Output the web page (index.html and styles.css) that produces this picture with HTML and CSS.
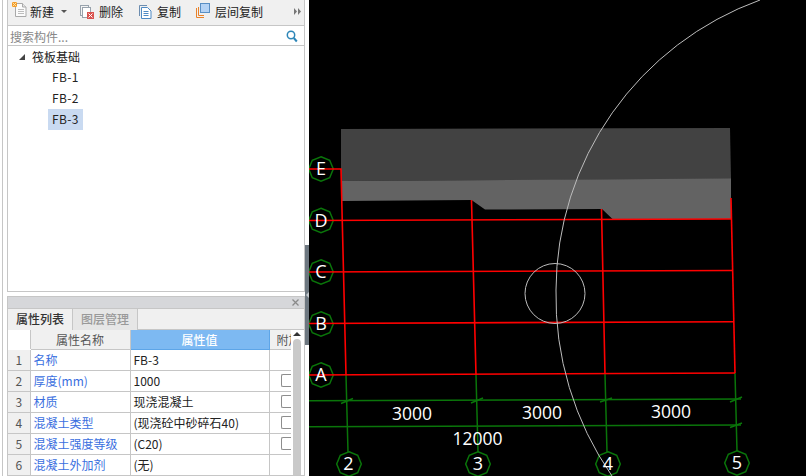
FILE: index.html
```html
<!DOCTYPE html>
<html lang="zh">
<head>
<meta charset="utf-8">
<title>筏板基础</title>
<link rel="stylesheet" href="styles.css">
</head>
<body>
<div class="app">
  <aside class="side">
    <div class="rail"></div>
    <div class="stack">
      <section class="panel top">
        <div class="toolbar">
          <span class="tool t-new">
            <svg class="ico" width="15" height="15" viewBox="0 0 15 15"><path d="M3.500 1.500h7l3.500 3.500v9.500H3.500z" fill="#fbfbfb" stroke="#a9a9a9"/><path d="M10.500 1.500v3.500H14" fill="#e6e6e6" stroke="#a9a9a9"/><path d="M6 7.500h6M6 9.500h6M6 11.500h6" stroke="#bdbdbd"/><rect x="0" y="0" width="5" height="5" fill="#f29a2e"/><path d="M0.500 0.500l4 4M4.500 0.500l-4 4" stroke="#ffe6a0"/></svg>
            <span>新建</span><i class="caret"></i>
          </span>
          <span class="tool t-del">
            <svg class="ico" width="14" height="14" viewBox="0 0 14 14"><rect x="0.500" y="0.500" width="8" height="10" fill="#f4f4f4" stroke="#98a2ac"/><rect x="2.500" y="2.500" width="8" height="10" fill="#fff" stroke="#98a2ac"/><rect x="7" y="7" width="7" height="7" fill="#d9534f"/><path d="M8.500 8.500l4 4M12.500 8.500l-4 4" stroke="#fff"/></svg>
            <span>删除</span>
          </span>
          <span class="tool t-copy">
            <svg class="ico" width="13" height="14" viewBox="0 0 13 14"><path d="M0.500 11V0.500H8" fill="none" stroke="#6c8db0"/><path d="M2.500 2.500h6l3.500 3.500v7.500H2.500z" fill="#fff" stroke="#4f8ac4"/><path d="M4.500 6.500h5M4.500 8.500h5M4.500 10.500h5" stroke="#4f8ac4"/></svg>
            <span>复制</span>
          </span>
          <span class="tool t-floor">
            <svg class="ico" width="14" height="15" viewBox="0 0 14 15"><path d="M0.500 14.500V5M0.500 14.500H8M2.500 12.500V4M2.500 12.500H8" fill="none" stroke="#e8822a"/><rect x="4.500" y="0.500" width="9" height="9" fill="#b5d3f5" stroke="#5a8fc4"/></svg>
            <span>层间复制</span>
          </span>
          <span class="more">
            <svg width="7" height="7" viewBox="0 0 7 7"><path d="M0 0l3 3.500L0 7zM4 0l3 3.500L4 7z" fill="#777"/></svg>
          </span>
        </div>
        <div class="search">
          <span class="ph">搜索构件...</span>
          <svg width="12" height="13" viewBox="0 0 12 13"><circle cx="5" cy="5" r="3.700" fill="none" stroke="#2d86b8" stroke-width="1.500"/><path d="M7.800 8l3 3.500" stroke="#2d86b8" stroke-width="2"/></svg>
        </div>
        <div class="tree">
          <div class="tree-root"><i class="arrow"></i><span>筏板基础</span></div>
          <div class="leaf">FB-1</div>
          <div class="leaf">FB-2</div>
          <div class="leaf sel">FB-3</div>
        </div>
      </section>
      <section class="panel props">
        <div class="props-title"><svg width="7" height="7" viewBox="0 0 7 7"><path d="M0.500 0.500l6 6M6.500 0.500l-6 6" stroke="#8a8a8a" stroke-width="1.300"/></svg></div>
        <div class="tabs"><span class="tab on">属性列表</span><span class="tab">图层管理</span></div>
        <div class="grid-wrap">
          <table class="grid">
            <thead>
              <tr><th class="n blank"></th><th class="k">属性名称</th><th class="v hot">属性值</th><th class="a"><span class="clip">附加</span></th></tr>
            </thead>
            <tbody>
              <tr><td class="n">1</td><td class="k">名称</td><td class="v">FB-3</td><td class="a"></td></tr>
              <tr><td class="n">2</td><td class="k">厚度(mm)</td><td class="v">1000</td><td class="a"><i class="cb"></i></td></tr>
              <tr><td class="n">3</td><td class="k">材质</td><td class="v">现浇混凝土</td><td class="a"><i class="cb"></i></td></tr>
              <tr><td class="n">4</td><td class="k">混凝土类型</td><td class="v">(现浇砼中砂碎石40)</td><td class="a"><i class="cb"></i></td></tr>
              <tr><td class="n">5</td><td class="k">混凝土强度等级</td><td class="v">(C20)</td><td class="a"><i class="cb"></i></td></tr>
              <tr><td class="n">6</td><td class="k">混凝土外加剂</td><td class="v">(无)</td><td class="a"></td></tr>
            </tbody>
          </table>
          <div class="scroll"><i class="up"></i><i class="thumb"></i></div>
        </div>
      </section>
    </div>
    <div class="splitter"><i class="grip"></i></div>
  </aside>
  <main class="canvas">
    <svg class="draw" width="497" height="476" viewBox="309 0 497 476">
      <defs>
        <polygon id="oct" points="0,-12.300 8.700,-8.700 12.300,0 8.700,8.700 0,12.300 -8.700,8.700 -12.300,0 -8.700,-8.700"/>
      </defs>
      <polygon points="341,129 730,128 731,179 341,181" fill="#424242"/>
      <polygon points="342,181 731,178.500 731,219 613,219.500 602,209 485,209.500 471.500,200 342,201" fill="#636363"/>
      <g fill="none" stroke="#0a750a" stroke-width="1.500">
        <path d="M346 375L348 452M476 375L478 452M605 374L607 452M735 373L737 451"/>
        <path d="M309 400.700L741 399M309 426.700L741 425"/>
        <path d="M341 403.500L353 398.500M471 403L483 398M600 402L612 398M730 402L742 397M730 427.500L742 423"/>
        <use href="#oct" x="321" y="169"/>
        <use href="#oct" x="321" y="220.500"/>
        <use href="#oct" x="321" y="272"/>
        <use href="#oct" x="321" y="324"/>
        <use href="#oct" x="321" y="375"/>
        <use href="#oct" x="349" y="464"/>
        <use href="#oct" x="478" y="464"/>
        <use href="#oct" x="608" y="464"/>
        <use href="#oct" x="737" y="463"/>
      </g>
      <g fill="none" stroke="#f00" stroke-width="1.600">
        <path d="M309 169H341L346 375"/>
        <path d="M309 220.500L731 219M309 272L732 270.500M309 323.500L734 321.700M309 375L735 373"/>
        <path d="M471.500 200L476 375M601.500 209L605 374"/>
        <path d="M731 198L735 373"/>
      </g>
      <g fill="none" stroke="#bdbdbd" stroke-width="1">
        <circle cx="555" cy="293.500" r="30"/>
        <path d="M760 0A309 309 0 0 0 556 290A315 315 0 0 0 612 476"/>
      </g>
      <g class="axis">
        <text x="321" y="175">E</text>
        <text x="321" y="227">D</text>
        <text x="321" y="278">C</text>
        <text x="321" y="330">B</text>
        <text x="321" y="381">A</text>
        <text x="348.500" y="470">2</text>
        <text x="478" y="470">3</text>
        <text x="608" y="470">4</text>
        <text x="737" y="469">5</text>
      </g>
      <g class="dim">
        <text x="412" y="420">3000</text>
        <text x="542" y="419">3000</text>
        <text x="671" y="418">3000</text>
        <text x="477.500" y="445">12000</text>
      </g>
    </svg>
  </main>
</div>
</body>
</html>
```
FILE: styles.css
```css
* { box-sizing: border-box; }
html, body { margin: 0; padding: 0; }
body { width: 806px; height: 476px; overflow: hidden; background: #000; font-family: "Noto Sans CJK SC", "Liberation Sans", sans-serif; font-size: 12px; color: #222; }
.app { display: flex; width: 806px; height: 476px; }
.side { width: 309px; flex: none; display: flex; background: #fff; }
.rail { width: 1px; margin-left: 2px; background: #c6c6c6; flex: none; }
.stack { width: 298px; margin-left: 4px; display: flex; flex-direction: column; flex: none; }
.splitter { width: 4px; height: 100px; margin-top: 245px; flex: none; background: #6d7780; display: flex; align-items: center; justify-content: center; }
.grip { border: 3px solid transparent; border-left: 0; border-right: 3px solid #c4c9ce; }
.panel { border: 1px solid #c6c6c6; }
.top { height: 292px; border-top: 0; }
.toolbar { height: 26px; background: #f0f0f0; display: flex; align-items: flex-start; padding-left: 4px; border-bottom: 1px solid #c6c6c6; }
.tool { display: inline-flex; align-items: center; height: 22px; white-space: nowrap; }
.tool .ico { margin-right: 5px; flex: none; margin-top: 1px; }
.t-new { width: 68px; }
.t-new .ico { margin-right: 3px; margin-top: -3px; }
.t-del { width: 59px; }
.t-copy { width: 57px; }
.t-floor { flex: 1; }
.t-floor .ico { margin-top: -2px; }
.caret { display: inline-block; border: 3px solid transparent; border-top: 3px solid #555; margin: 3px 0 0 7px; }
.more { display: flex; margin: 8px 3px 0 0; }
.search { height: 20px; display: flex; align-items: center; justify-content: space-between; padding: 2px 6px 0 2px; border-bottom: 1px solid #c6c6c6; background: #fff; }
.ph { color: #888; }
.tree { background: #fff; }
.tree-root { height: 21px; display: flex; align-items: center; padding-left: 11px; }
.arrow { width: 0; height: 0; border-style: solid; border-width: 0 0 6px 6px; border-color: transparent transparent #444 transparent; margin-right: 7px; }
.leaf { height: 21px; width: 35px; margin-left: 40px; padding-left: 4px; line-height: 20px; letter-spacing: .4px; }
.sel { background: #c9daf1; }
.props { margin-top: 4px; flex: 1; min-height: 0; overflow: hidden; }
.props-title { height: 11px; background: #d6d7da; display: flex; justify-content: flex-end; align-items: center; padding-right: 5px; }
.tabs { height: 22px; background: #f0f0f0; display: flex; border-top: 1px solid #c6c6c6; border-bottom: 1px solid #c6c6c6; }
.tab { width: 65px; height: 21px; line-height: 20px; text-align: center; color: #999; background: #e6e6e6; border-right: 1px solid #c6c6c6; font-weight: 500; }
.tab.on { color: #333; background: #f0f0f0; }
.grid-wrap { position: relative; height: 150px; overflow: hidden; background: #fff; }
.grid { border-collapse: collapse; table-layout: fixed; width: 284px; }
.grid th, .grid td { height: 21px; padding: 0; border: 1px solid #c6c6c6; font-weight: 400; white-space: nowrap; overflow: hidden; }
.grid tr:first-child th { border-top: 0; height: 19px; }
.grid th:first-child, .grid td:first-child { border-left: 0; }
.grid .n { width: 22px; text-align: center; background: #f0f0f0; color: #555; }
.grid th.blank { background: #fff; border-color: #fff; border-right-color: #c6c6c6; }
.grid .k { width: 100px; }
.grid td.k { color: #3a6fe0; padding-left: 3px; }
.grid th.k { background: #f0f0f0; color: #555; text-align: center; }
.grid .v { width: 139px; }
.grid td.v { padding-left: 3px; color: #222; }
.grid th.hot { background: #7db9f2; color: #fff; font-weight: 500; text-align: center; border: 1px solid #5da5e8; }
.grid .a { width: 23px; text-align: left; border-right: 0; }
.grid th.a { background: #f0f0f0; color: #555; padding-left: 7px; }
.clip { display: block; width: 14px; overflow: hidden; }
.cb { display: block; width: 10px; height: 13px; margin-left: 11px; border: 1px solid #8d8d8d; border-right: 0; border-radius: 2px 0 0 2px; background: #fff; }
.scroll { position: absolute; right: 0; top: 0; width: 13px; height: 100%; background: #fff; }
.up { position: absolute; left: 2px; top: 2px; border: 4px solid transparent; border-top: 0; border-bottom: 4px solid #333; }
.thumb { position: absolute; left: 2px; top: 9px; width: 8px; bottom: 0; background: #c9c9c9; border-radius: 4px 4px 0 0; }
.canvas { flex: 1; background: #000; overflow: hidden; }
.draw { display: block; }
.axis text { fill: #fff; font-family: "Open Sans", sans-serif; font-size: 18px; text-anchor: middle; }
.dim text { fill: #fff; font-family: "Open Sans", sans-serif; font-size: 17.5px; text-anchor: middle; }
```
